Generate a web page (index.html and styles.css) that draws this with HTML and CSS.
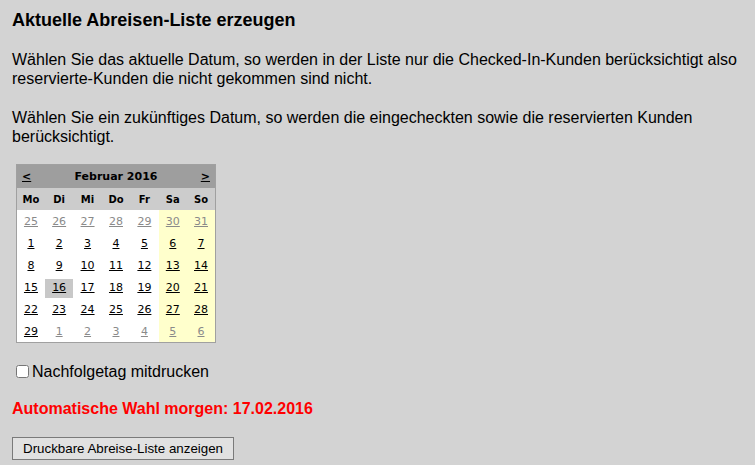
FILE: index.html
```html
<!DOCTYPE html>
<html lang="de">
<head>
<meta charset="utf-8">
<title>Aktuelle Abreisen-Liste erzeugen</title>
<link rel="stylesheet" href="styles.css">
</head>
<body>
<div class="page">
  <h1 class="title">Aktuelle Abreisen-Liste erzeugen</h1>
  <p class="text">Wählen Sie das aktuelle Datum, so werden in der Liste nur die Checked-In-Kunden berücksichtigt also reservierte-Kunden die nicht gekommen sind nicht.</p>
  <p class="text">Wählen Sie ein zukünftiges Datum, so werden die eingecheckten sowie die reservierten Kunden berücksichtigt.</p>

  <table class="cal">
    <thead>
      <tr class="cal-head">
        <th class="nav nav-prev"><a href="#">&lt;</a></th>
        <th class="month" colspan="5">Februar 2016</th>
        <th class="nav nav-next"><a href="#">&gt;</a></th>
      </tr>
      <tr class="cal-days">
        <th>Mo</th><th>Di</th><th>Mi</th><th>Do</th><th>Fr</th><th>Sa</th><th>So</th>
      </tr>
    </thead>
    <tbody>
      <tr>
        <td class="other"><a href="#">25</a></td><td class="other"><a href="#">26</a></td><td class="other"><a href="#">27</a></td><td class="other"><a href="#">28</a></td><td class="other"><a href="#">29</a></td><td class="we other"><a href="#">30</a></td><td class="we other"><a href="#">31</a></td>
      </tr>
      <tr>
        <td><a href="#">1</a></td><td><a href="#">2</a></td><td><a href="#">3</a></td><td><a href="#">4</a></td><td><a href="#">5</a></td><td class="we"><a href="#">6</a></td><td class="we"><a href="#">7</a></td>
      </tr>
      <tr>
        <td><a href="#">8</a></td><td><a href="#">9</a></td><td><a href="#">10</a></td><td><a href="#">11</a></td><td><a href="#">12</a></td><td class="we"><a href="#">13</a></td><td class="we"><a href="#">14</a></td>
      </tr>
      <tr>
        <td><a href="#">15</a></td><td class="sel"><a href="#">16</a></td><td><a href="#">17</a></td><td><a href="#">18</a></td><td><a href="#">19</a></td><td class="we"><a href="#">20</a></td><td class="we"><a href="#">21</a></td>
      </tr>
      <tr>
        <td><a href="#">22</a></td><td><a href="#">23</a></td><td><a href="#">24</a></td><td><a href="#">25</a></td><td><a href="#">26</a></td><td class="we"><a href="#">27</a></td><td class="we"><a href="#">28</a></td>
      </tr>
      <tr>
        <td><a href="#">29</a></td><td class="other"><a href="#">1</a></td><td class="other"><a href="#">2</a></td><td class="other"><a href="#">3</a></td><td class="other"><a href="#">4</a></td><td class="we other"><a href="#">5</a></td><td class="we other"><a href="#">6</a></td>
      </tr>
    </tbody>
  </table>

  <label class="check"><input type="checkbox" class="check-box"><span>Nachfolgetag mitdrucken</span></label>

  <p class="auto">Automatische Wahl morgen: 17.02.2016</p>

  <button type="button" class="btn">Druckbare Abreise-Liste anzeigen</button>
</div>
</body>
</html>
```

FILE: styles.css
```css
html, body {
  margin: 0;
  padding: 0;
  background: #d3d3d3;
}

.page {
  padding: 10px 12px 0 12px;
  font-family: "Liberation Sans", Arial, sans-serif;
  font-size: 16px;
  line-height: 19px;
  color: #000;
  display: flex;
  flex-direction: column;
  align-items: flex-start;
}

.title {
  margin: 0;
  font-size: 18px;
  line-height: 20px;
  font-weight: bold;
}

.text {
  margin: 20px 0 0 0;
}

.cal {
  margin: 18px 0 0 4px;
  width: 200px;
  border-collapse: collapse;
  border: 1px solid #a0a0a0;
  background: #fff;
  font-family: "DejaVu Sans", Verdana, sans-serif;
  font-size: 11px;
  line-height: 13px;
  table-layout: fixed;
}

.cal th, .cal td {
  padding: 0;
  text-align: center;
  border: 0;
}

.cal-head th {
  background: #9e9e9e;
  height: 23px;
  font-weight: bold;
}

.cal-head .nav a {
  color: #000;
  text-decoration: underline;
  font-weight: bold;
}

.nav-prev {
  text-align: left !important;
  padding-left: 5px !important;
}

.nav-next {
  text-align: right !important;
  padding-right: 5px !important;
}

.cal-days th {
  background: #cccccc;
  height: 22px;
  font-size: 10px;
  font-weight: bold;
}

.cal td {
  height: 22px;
}

.cal td a {
  color: #000;
  text-decoration: underline;
}

.cal td.we {
  background: #ffffcc;
}

.cal td.other a {
  color: #8a8a8a;
}

.cal td.sel {
  background: #c8c8c8;
  box-shadow: inset 0 3px 0 #fff;
}

.check {
  margin-top: 19px;
  display: flex;
  align-items: center;
  margin-left: 4px;
}

.check-box {
  margin: 0 3px 0 0;
  width: 13px;
  height: 13px;
}

.auto {
  margin: 18px 0 0 0;
  color: #ff0000;
  font-weight: bold;
}

.btn {
  margin-top: 19px;
  font-family: "Liberation Sans", Arial, sans-serif;
  font-size: 13.33px;
  height: 23px;
  padding: 0 10px;
  background: #e1e1e1;
  border: 1px solid #7a7a7a;
  border-radius: 0;
  color: #000;
}
```
